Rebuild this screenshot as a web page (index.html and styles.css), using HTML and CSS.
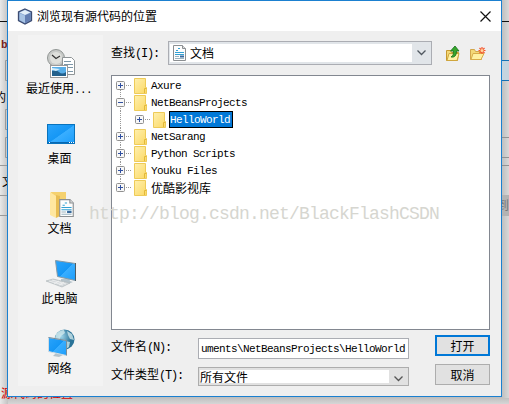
FILE: index.html
```
<!DOCTYPE html>
<html lang="zh-CN">
<head>
<meta charset="UTF-8">
<title>浏览现有源代码的位置</title>
<link rel="stylesheet" href="styles.css">
</head>
<body>

<!-- shared shapes -->
<svg class="defs" width="0" height="0">
  <defs>
    <linearGradient id="yellow" x1="0" y1="0" x2="1" y2="1"><stop offset="0" stop-color="#fff0ae"/><stop offset="1" stop-color="#fbd864"/></linearGradient>
    <linearGradient id="blue" x1="0" y1="0" x2="1" y2="1"><stop offset="0" stop-color="#2ba4fb"/><stop offset=".5" stop-color="#1597f5"/><stop offset=".52" stop-color="#39aeff"/><stop offset="1" stop-color="#1b9dfb"/></linearGradient>
    <radialGradient id="earth" cx=".35" cy=".35"><stop offset="0" stop-color="#9ed4e8"/><stop offset="1" stop-color="#2a7398"/></radialGradient>
    <symbol id="folder" viewBox="0 0 13 16">
      <path d="M.5.5h11v9h1v6H.5z" fill="url(#yellow)" stroke="#eecb58"/>
      <path d="M10.500 15V10.500h2" fill="none" stroke="#e3b93a"/>
    </symbol>
    <symbol id="doc" viewBox="0 0 13 16">
      <path d="M.5.5h9l3 3v12H.5z" fill="#fdfdfd" stroke="#8b8f92"/>
      <path d="M9.500.5v3h3" fill="#ddd" stroke="#8b8f92"/>
      <path d="M3 5.500h2M5 3.500h2M2 7.500h9M2 9.500h9" stroke="#32a1d4"/>
      <path d="M2 11.500h4M2 13.500h9" stroke="#9bb4c0"/>
      <path d="M7 10.500h4v2H7z" fill="#37699c"/>
    </symbol>
    <symbol id="plus" viewBox="0 0 9 9">
      <rect x=".5" y=".5" width="8" height="8" rx="1" fill="#f7f7f7" stroke="#919191"/>
      <path d="M2 4.500h5M4.500 2v5" stroke="#3050a0"/>
    </symbol>
    <symbol id="minus" viewBox="0 0 9 9">
      <rect x=".5" y=".5" width="8" height="8" rx="1" fill="#f7f7f7" stroke="#919191"/>
      <path d="M2 4.500h5" stroke="#3050a0"/>
    </symbol>
  </defs>
</svg>

<!-- IDE wizard behind the dialog -->
<svg class="backdrop" width="509" height="404">
  <defs>
    <linearGradient id="shadeL"><stop offset="0" stop-color="#e9e9e9"/><stop offset="1" stop-color="#c2c2c2"/></linearGradient>
    <linearGradient id="shadeR"><stop offset="0" stop-color="#bcbcbc"/><stop offset="1" stop-color="#d8d8d8"/></linearGradient>
    <linearGradient id="shadeB" x1="0" y1="0" x2="0" y2="1"><stop offset="0" stop-color="#b9b9b9"/><stop offset="1" stop-color="#d6d6d6"/></linearGradient>
  </defs>
  <rect width="8" height="404" fill="url(#shadeL)"/>
  <rect x="8" y="396" width="501" height="8" fill="url(#shadeB)"/>
  <rect x="501" width="8" height="398" fill="url(#shadeR)"/>
  <path d="M0 21.500h8M501 21.500h8" stroke="#111"/>
  <path d="M8 60.500H5.500v20H8M8 109.500H5.500v20H8M8 137.500H5.500v20H8M0 165.500h8M0 195.500h8M0 215.500h8" fill="none" stroke="#999"/>
  <rect x="501" y="60" width="8" height="20" fill="#c5d4df"/>
  <path d="M501 60.500h8M501 80.500h8" stroke="#1671b5"/>
  <path d="M501 137.500h8M501 157.500h8M501 165.500h8" stroke="#929292"/>
  <rect x="501" y="195" width="8" height="21" fill="#b3b3b3"/>
  <text x="1" y="48" class="wiz mono">b</text>
  <text x="-6" y="102" class="wiz">的</text>
  <text x="2" y="186" class="wiz">文</text>
  <text x="497" y="210" class="wiz dim">到</text>
  <text x="1" y="398" class="wiz err">源代码的位置</text>
</svg>

<div class="dialog">
  <div class="titlebar">
    <svg width="16" height="17" viewBox="0 0 16 17">
      <path d="M8 1l6.500 3v8.500L8 16l-6.500-3.500V4z" fill="#7b9bcc" stroke="#3c4c72" stroke-width="1.300"/>
      <path d="M2.500 4.500L8 2l5.500 2.500L8 7z" fill="#e4f0f8"/>
      <path d="M2.500 5L8 7.500v7.500l-5.500-3z" fill="#a8c4e4"/>
      <path d="M13.500 5L8 7.500v7.500l5.500-3z" fill="#647fb2"/>
    </svg>
    <span class="title">浏览现有源代码的位置</span>
    <svg class="close" width="11" height="11" viewBox="0 0 11 11"><path d="M.5.5l10 10M10.500.5l-10 10" stroke="#111" stroke-width="1.200"/></svg>
  </div>

  <div class="body">
    <div class="places">
      <div class="place">
        <svg width="32" height="32" viewBox="0 0 32 32">
          <circle cx="11" cy="11" r="8.500" fill="#c8cac8" stroke="#919694"/>
          <circle cx="11" cy="11" r="6" fill="#dfe0dc"/>
          <path d="M7 8l4 3.500L15 9" fill="none" stroke="#333" stroke-width="1.200"/>
          <path d="M17.500 10.500h9l3 3v14h-12z" fill="#fff" stroke="#8f9496"/>
          <path d="M19 14.500h7M19 17.500h9M23 20.500h5M23 24.500h5" stroke="#7d97a8"/>
          <rect x="5.500" y="18.500" width="17" height="12" fill="#fff" stroke="#9a9a9a"/>
          <rect x="7" y="20" width="14" height="9" fill="#58aee8"/>
          <path d="M7 24q4-2 7 1t7 0v4H7z" fill="#24618c"/>
          <path d="M7 21l8 1-4 2-4-1z" fill="#d5eefc"/>
        </svg>
        <span class="recent">最近使用<span class="en">...</span></span>
      </div>
      <div class="place">
        <svg width="32" height="32" viewBox="0 0 32 32">
          <rect x="2.500" y="7.500" width="27" height="19" fill="url(#blue)" stroke="#0873bd"/>
          <path d="M3 25.500h26" stroke="#0867b0"/>
          <path d="M4 25.500h1M24 25.500h1M26 25.500h1M28 25.500h1" stroke="#fff"/>
        </svg>
        <span>桌面</span>
      </div>
      <div class="place">
        <svg width="32" height="32" viewBox="0 0 32 32">
          <path d="M6 5h15v23H9z" fill="#f5d16e"/>
          <path d="M5 5l6 4v22l-6-3z" fill="#ffe7a0"/>
          <path d="M11 31l4-2V9l-4-1z" fill="#e8bd53"/>
          <use href="#doc" x="14" y="12" width="15" height="18"/>
        </svg>
        <span>文档</span>
      </div>
      <div class="place">
        <svg width="32" height="32" viewBox="0 0 32 32">
          <path d="M16 22l8-1 1 3 3 1-5 2-7-1z" fill="#b5c3cb"/>
          <path d="M10.500 3.500l20 3v17l-18-4z" fill="url(#blue)" stroke="#8699a4"/>
          <path d="M30.500 6v18" stroke="#4b5c66"/>
          <path d="M1 24l7-2 17 4-8 4z" fill="#d2d7da" stroke="#aab1b5" stroke-width=".6"/>
          <path d="M4 24l14 4M7 23l14 4M9 27l5-3M14 28l5-3" stroke="#f5f5f5" stroke-width=".7"/>
        </svg>
        <span>此电脑</span>
      </div>
      <div class="place">
        <svg width="32" height="32" viewBox="0 0 32 32">
          <circle cx="19.500" cy="12.500" r="10" fill="url(#earth)"/>
          <path d="M11 7q4-4 8-4l1 3-4 3-2 5-4-2zM22 4l5 3 2 6-4-1-2-4zM20 14l5 1-1 5-3 2z" fill="#d8edf0" opacity=".75"/>
          <path d="M11 26l5-1 2 3-4 2-6-1z" fill="#b5c3cb"/>
          <path d="M3.500 10.500l18 3v15l-18-4z" fill="url(#blue)" stroke="#d1dce2"/>
          <path d="M3.500 10.500l18 3v15" fill="none" stroke="#536b7b" stroke-width=".7"/>
        </svg>
        <span>网络</span>
      </div>
    </div>

    <div class="main">
      <div class="lookup">
        <label>查找<span class="en">(I):</span></label>
        <div class="combo combo-dir">
          <div class="combo-value">
            <svg width="13" height="16"><use href="#doc"/></svg>
            <span>文档</span>
          </div>
          <svg class="arrow" width="9" height="6" viewBox="0 0 9 6"><path d="M.5.5l4 4 4-4" fill="none" stroke="#505860" stroke-width="1.300"/></svg>
        </div>
        <svg class="tool" width="14" height="17" viewBox="0 0 14 17">
          <path d="M.5 15.500v-10h4l1 2h7l-1 8z" fill="#f3d878" stroke="#c7992f"/>
          <path d="M1 15.500l2-7h10l-2 7z" fill="#fff2a5" stroke="#d0a63d"/>
          <path d="M5 12q3-1 2.500-6H4.500L9 1l4 5h-2.500q0 7-5.500 6z" fill="#38a62d" stroke="#16701b" stroke-width=".8"/>
        </svg>
        <svg class="tool" width="16" height="17" viewBox="0 0 16 17">
          <path d="M.5 14.500v-10h4l1 2h6v8z" fill="#f3d878" stroke="#d3a64b"/>
          <path d="M1 14.500l2-6h11l-3 6z" fill="#fff0a2" stroke="#d8ac4a"/>
          <path d="M12 2v7M8.500 5.500h7M9.500 3l5 5M14.500 3l-5 5" stroke="#f5552c" stroke-width="1.200"/>
          <circle cx="12" cy="5.500" r="1.500" fill="#ffd9a0"/>
        </svg>
      </div>

      <div class="tree">
        <div class="row"><svg width="9" height="9"><use href="#plus"/></svg><i class="dots"></i><svg width="13" height="16"><use href="#folder"/></svg><span class="en">Axure</span></div>
        <div class="row"><svg width="9" height="9"><use href="#minus"/></svg><i class="dots"></i><svg width="13" height="16"><use href="#folder"/></svg><span class="en">NetBeansProjects</span></div>
        <div class="row child"><svg width="9" height="9"><use href="#plus"/></svg><i class="dots"></i><svg width="13" height="16"><use href="#folder"/></svg><span class="en selected">HelloWorld</span></div>
        <div class="row"><svg width="9" height="9"><use href="#plus"/></svg><i class="dots"></i><svg width="13" height="16"><use href="#folder"/></svg><span class="en">NetSarang</span></div>
        <div class="row"><svg width="9" height="9"><use href="#plus"/></svg><i class="dots"></i><svg width="13" height="16"><use href="#folder"/></svg><span class="en">Python Scripts</span></div>
        <div class="row"><svg width="9" height="9"><use href="#plus"/></svg><i class="dots"></i><svg width="13" height="16"><use href="#folder"/></svg><span class="en">Youku Files</span></div>
        <div class="row"><svg width="9" height="9"><use href="#plus"/></svg><i class="dots"></i><svg width="13" height="16"><use href="#folder"/></svg><span>优酷影视库</span></div>
      </div>

      <div class="bottom">
        <div class="fields">
          <div class="field">
            <label>文件名<span class="en">(N):</span></label>
            <div class="input en">uments\NetBeansProjects\HelloWorld</div>
          </div>
          <div class="field">
            <label>文件类型<span class="en">(T):</span></label>
            <div class="combo combo-type">
              <div class="combo-value">所有文件</div>
              <svg class="arrow" width="9" height="6" viewBox="0 0 9 6"><path d="M.5.5l4 4 4-4" fill="none" stroke="#555" stroke-width="1.300"/></svg>
            </div>
          </div>
        </div>
        <div class="buttons">
          <div class="btn primary">打开</div>
          <div class="btn">取消</div>
        </div>
      </div>
    </div>
  </div>
</div>

<div class="watermark">http://blog.csdn.net/BlackFlashCSDN</div>

</body>
</html>
```
FILE: styles.css
```
* { box-sizing: border-box; }
body { margin: 0; width: 509px; height: 404px; overflow: hidden; position: relative; background: #d6d6d6; color: #000; font: 12px/16px "Noto Sans CJK SC", sans-serif; }
svg { display: block; flex: none; }
.defs { position: absolute; }
.backdrop { position: absolute; left: 0; top: 0; }
.wiz { font-size: 12px; }
.wiz.mono { font: bold 11px "Liberation Mono", monospace; fill: #722; }
.wiz.dim { fill: #777; }
.wiz.err { fill: #d40000; }

/* latin runs are 6px per character, half of a hanzi */
.en { font-family: "Liberation Mono", monospace; font-size: 11px; letter-spacing: -0.6px; white-space: pre; }
label .en { font-size: 12px; letter-spacing: -1.2px; }

.dialog { position: absolute; left: 7px; top: 0; width: 495px; height: 397px; border: 1px solid #1b80d0; background: #efefef; white-space: nowrap; }
.titlebar { height: 30px; background: #fff; display: flex; align-items: center; padding: 0 10px 0 9px; }
.title { margin-left: 4px; }
.close { margin-left: auto; }
.body { display: flex; gap: 8px; padding: 4px 11px 0 10px; }

.places { width: 85px; height: 351px; background: #f3f3f3; }
.place { height: 70px; padding-top: 12px; display: flex; flex-direction: column; align-items: center; }
.place > span { line-height: 18px; margin-right: 2px; }
.recent { padding-right: 1px; }

.main { flex: 1; }
.lookup { display: flex; align-items: center; height: 24px; margin: 6px 0 10px; }
.lookup label { width: 57px; }
.combo { display: flex; border: 1px solid #abadb3; }
.combo-value { flex: 1; background: #fff; display: flex; align-items: center; }
.combo .arrow { margin: auto 5px; }
.combo-dir { width: 264px; height: 24px; padding: 2px 0 2px 1px; background: #e1e5e9; }
.combo-dir .combo-value { gap: 4px; padding-left: 3px; }
.tool { margin-left: 14px; }
.tool + .tool { margin-left: 10px; }

.tree { height: 255px; border: 1px solid #828790; background: #fff; padding: 1px 0 0 4px; }
.row { display: flex; align-items: center; height: 17px; background: repeating-linear-gradient(#999 0 1px, #fff 1px 2px) 4px 0 / 1px 100% no-repeat; }
.row:first-child { background-position: 4px 9px; }
.row:last-child { background-size: 1px 8px; }
.row > span { margin-left: 4px; }
.dots { width: 6px; height: 1px; margin: 0 2px 0 1px; background: repeating-linear-gradient(90deg, #999 0 1px, #fff 1px 2px); }
.child { padding-left: 19px; }
.row .selected { margin-left: 3px; height: 17px; line-height: 17px; padding: 0 2px 0 0; border: 1px solid #000; background: #0078d7; color: #fff; }

.bottom { display: flex; justify-content: space-between; padding-top: 5px; }
.fields { display: flex; flex-direction: column; gap: 8px; padding-top: 3px; }
.field { display: flex; align-items: center; }
.field label { width: 87px; margin-top: -3px; }
.input { width: 211px; height: 21px; border: 1px solid #abadb3; background: #fff; line-height: 21px; padding-left: 2px; overflow: hidden; }
.combo-type { width: 211px; height: 19px; padding: 2px 0 2px 1px; background: #e1e1e1; border-color: #adadad; }
.combo-type .arrow { margin: 6px 5px 0; }
.buttons { display: flex; flex-direction: column; gap: 8px; }
.btn { width: 55px; height: 21px; line-height: 19px; text-align: center; border: 1px solid #adadad; background: #e1e1e1; }
.btn.primary { border: 2px solid #0078d7; line-height: 17px; }

.watermark { position: absolute; left: 89px; top: 203px; font: 18px/22px "Liberation Mono", monospace; letter-spacing: -0.8px; color: #d6d6d0; white-space: pre; }
```
